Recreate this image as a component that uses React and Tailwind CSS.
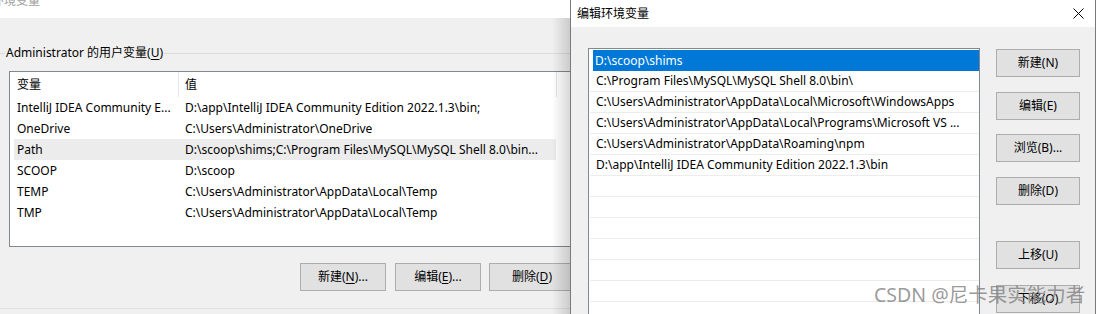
import React from "react";

const F = "font-['Noto_Sans','Noto_Sans_CJK_SC',sans-serif]";

function WinButton({ children, className = "" }) {
  return (
    <div
      className={`shrink-0 flex items-center justify-center h-[28px] bg-[#e1e1e1] border border-[#adadad] text-[12px] text-black ${className}`}
    >
      {children}
    </div>
  );
}

const leftRows = [
  ["IntelliJ IDEA Community E...", "D:\\app\\IntelliJ IDEA Community Edition 2022.1.3\\bin;"],
  ["OneDrive", "C:\\Users\\Administrator\\OneDrive"],
  ["Path", "D:\\scoop\\shims;C:\\Program Files\\MySQL\\MySQL Shell 8.0\\bin...", true],
  ["SCOOP", "D:\\scoop"],
  ["TEMP", "C:\\Users\\Administrator\\AppData\\Local\\Temp"],
  ["TMP", "C:\\Users\\Administrator\\AppData\\Local\\Temp"],
];

const pathRows = [
  "D:\\scoop\\shims",
  "C:\\Program Files\\MySQL\\MySQL Shell 8.0\\bin\\",
  "C:\\Users\\Administrator\\AppData\\Local\\Microsoft\\WindowsApps",
  "C:\\Users\\Administrator\\AppData\\Local\\Programs\\Microsoft VS ...",
  "C:\\Users\\Administrator\\AppData\\Roaming\\npm",
  "D:\\app\\IntelliJ IDEA Community Edition 2022.1.3\\bin",
  "", "", "", "", "", "", "",
];

function U({ children }) {
  return <span className="underline underline-offset-2">{children}</span>;
}

export default function App() {
  return (
    <div className={`relative w-[1101px] h-[314px] overflow-hidden bg-white ${F} text-[12px] text-black`}>
      {/* Background window */}
      <div className="flex flex-col w-[580px] h-full">
        <div className="shrink-0 h-[18px] bg-white overflow-hidden">
          <div className="-mt-[7px] -ml-[8px] text-[12px] text-[#a0a0a0] leading-[16px]">环境变量</div>
        </div>
        <div className="flex-1 bg-[#f0f0f0] flex flex-col">
          {/* group label */}
          <div className="shrink-0 flex items-center mt-[26px] h-[18px]">
            <div className="w-[5px] h-px bg-[#dcdcdc]" />
            <div className="px-[1px] leading-[18px]">Administrator 的用户变量(<U>U</U>)</div>
            <div className="flex-1 h-px bg-[#dcdcdc]" />
          </div>
          {/* list */}
          <div className="shrink-0 ml-[9px] mt-[9px] w-[565px] h-[176px] bg-white border border-[#828790] flex flex-col">
            <div className="flex h-[25px] items-center">
              <div className="w-[168px] pl-[7px]">变量</div>
              <div className="w-px h-full bg-[#e5e5e5]" />
              <div className="w-[377px] pl-[6px]">值</div>
              <div className="w-px h-full bg-[#e5e5e5]" />
            </div>
            {leftRows.map(([k, v, sel]) => (
              <div
                key={k}
                className={`flex items-center h-[21px] ml-[4px] w-[542px] ${sel ? "bg-[#ececec]" : ""}`}
              >
                <div className="w-[164px] pl-[3px] whitespace-nowrap overflow-hidden">{k}</div>
                <div className="flex-1 pl-[7px] whitespace-nowrap overflow-hidden">{v}</div>
              </div>
            ))}
          </div>
          {/* buttons */}
          <div className="shrink-0 flex ml-[300px] mt-[16px] gap-[9px]">
            <WinButton className="w-[86px]">新建(<U>N</U>)...</WinButton>
            <WinButton className="w-[86px]">编辑(<U>E</U>)...</WinButton>
            <WinButton className="w-[86px] -ml-px">删除(<U>D</U>)</WinButton>
          </div>
          <div className="shrink-0 mt-[17px] h-px bg-[#dfdfdf]" />
        </div>
      </div>

      {/* dialog shadow */}
      <div className="absolute top-[18px] left-[552px] w-[18px] h-[296px] bg-linear-to-r from-transparent to-black/15" />

      {/* Foreground dialog */}
      <div className="absolute top-0 left-[570px] w-[526px] h-[330px] border-l border-r border-[#7a7a7a] bg-[#f0f0f0] flex flex-col">
        <div className="shrink-0 h-[27px] bg-white flex items-center justify-between pl-[6px] pr-[11px]">
          <div>编辑环境变量</div>
          <svg width="11" height="11" viewBox="0 0 11 11" className="block">
            <path d="M0.5 0.5 L10.5 10.5 M10.5 0.5 L0.5 10.5" stroke="#000" strokeWidth="1" />
          </svg>
        </div>
        <div className="flex flex-1 pl-[17px] pt-[21px]">
          <div className="shrink-0 w-[392px] h-[300px] bg-white border border-[#828790] flex flex-col pt-px">
            {pathRows.map((p, i) =>
              i === 0 ? (
                <div key={i} className="shrink-0 h-[21px] ml-[4px] bg-[#0078d7] text-white flex items-center pl-[2px]">
                  {p}
                </div>
              ) : (
                <div
                  key={i}
                  className="shrink-0 h-[21px] ml-px border-b border-[#ececec] flex items-center pl-[6px] whitespace-nowrap overflow-hidden"
                >
                  {p}
                </div>
              )
            )}
          </div>
          <div className="ml-[16px] w-[84px] flex flex-col pt-px">
            <WinButton>新建(N)</WinButton>
            <WinButton className="mt-[15px]">编辑(E)</WinButton>
            <WinButton className="mt-[14px]">浏览(B)...</WinButton>
            <WinButton className="mt-[15px]">删除(D)</WinButton>
            <WinButton className="mt-[36px]">上移(U)</WinButton>
            <WinButton className="mt-[16px]">下移(O)</WinButton>
          </div>
        </div>
      </div>

      {/* watermark */}
      <div className="absolute left-[874px] top-[282px] text-[19.5px] leading-[26px] text-[#7f7f7f]/80 whitespace-nowrap">
        CSDN @尼卡果实能力者
      </div>
    </div>
  );
}
